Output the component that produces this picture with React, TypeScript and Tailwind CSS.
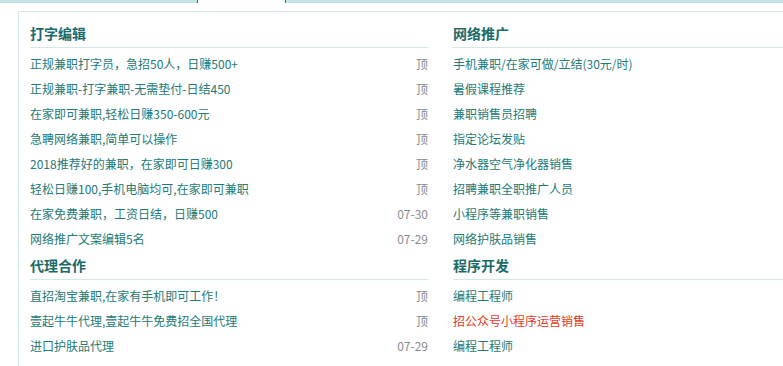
import React from "react";

type Item = { t: string; r?: string; red?: boolean };
type Section = { title: string; items: Item[] };

const left: Section[] = [
  {
    title: "打字编辑",
    items: [
      { t: "正规兼职打字员，急招50人，日赚500+", r: "顶" },
      { t: "正规兼职-打字兼职-无需垫付-日结450", r: "顶" },
      { t: "在家即可兼职,轻松日赚350-600元", r: "顶" },
      { t: "急聘网络兼职,简单可以操作", r: "顶" },
      { t: "2018推荐好的兼职，在家即可日赚300", r: "顶" },
      { t: "轻松日赚100,手机电脑均可,在家即可兼职", r: "顶" },
      { t: "在家免费兼职，工资日结，日赚500", r: "07-30" },
      { t: "网络推广文案编辑5名", r: "07-29" },
    ],
  },
  {
    title: "代理合作",
    items: [
      { t: "直招淘宝兼职,在家有手机即可工作！", r: "顶" },
      { t: "壹起牛牛代理,壹起牛牛免费招全国代理", r: "顶" },
      { t: "进口护肤品代理", r: "07-29" },
    ],
  },
];

const right: Section[] = [
  {
    title: "网络推广",
    items: [
      { t: "手机兼职/在家可做/立结(30元/时)" },
      { t: "暑假课程推荐" },
      { t: "兼职销售员招聘" },
      { t: "指定论坛发贴" },
      { t: "净水器空气净化器销售" },
      { t: "招聘兼职全职推广人员" },
      { t: "小程序等兼职销售" },
      { t: "网络护肤品销售" },
    ],
  },
  {
    title: "程序开发",
    items: [
      { t: "编程工程师" },
      { t: "招公众号小程序运营销售", red: true },
      { t: "编程工程师" },
    ],
  },
];

function Column({ sections }: { sections: Section[] }) {
  return (
    <div className="w-[398px] shrink-0 flex flex-col">
      {sections.map((s) => (
        <div key={s.title} className="flex flex-col">
          <div className="h-[29px] flex items-center border-b border-[#d2e8e8] text-[14px] font-bold text-[#1a6a68]">
            {s.title}
          </div>
          <ul className="pt-[3px]">
            {s.items.map((it, i) => (
              <li key={i} className="h-[25px] flex items-center justify-between text-[12px]">
                <span className={it.red ? "text-[#e5391c]" : "text-[#237a78]"}>{it.t}</span>
                {it.r ? <span className="text-[#8a8a8a]">{it.r}</span> : null}
              </li>
            ))}
          </ul>
        </div>
      ))}
    </div>
  );
}

export default function App() {
  return (
    <div
      className="w-[783px] h-[366px] overflow-hidden bg-white relative"
      style={{ fontFamily: '"Noto Sans CJK SC", "Noto Sans", sans-serif' }}
    >
      <div className="flex h-[3px]">
        <div className="w-[197px] bg-[#c2e4e4]" />
        <div className="w-[1px] bg-[#5a6a6a]" />
        <div className="w-[87px] bg-white" />
        <div className="w-[1px] bg-[#5a6a6a]" />
        <div className="flex-1 bg-[#c2e4e4]" />
      </div>
      <div className="ml-[18px] mt-[8px] w-[860px] h-[400px] border-l border-t border-[#d0e8e8] pl-[11px] pt-[7px] flex gap-[25px]">
        <Column sections={left} />
        <Column sections={right} />
      </div>
    </div>
  );
}
